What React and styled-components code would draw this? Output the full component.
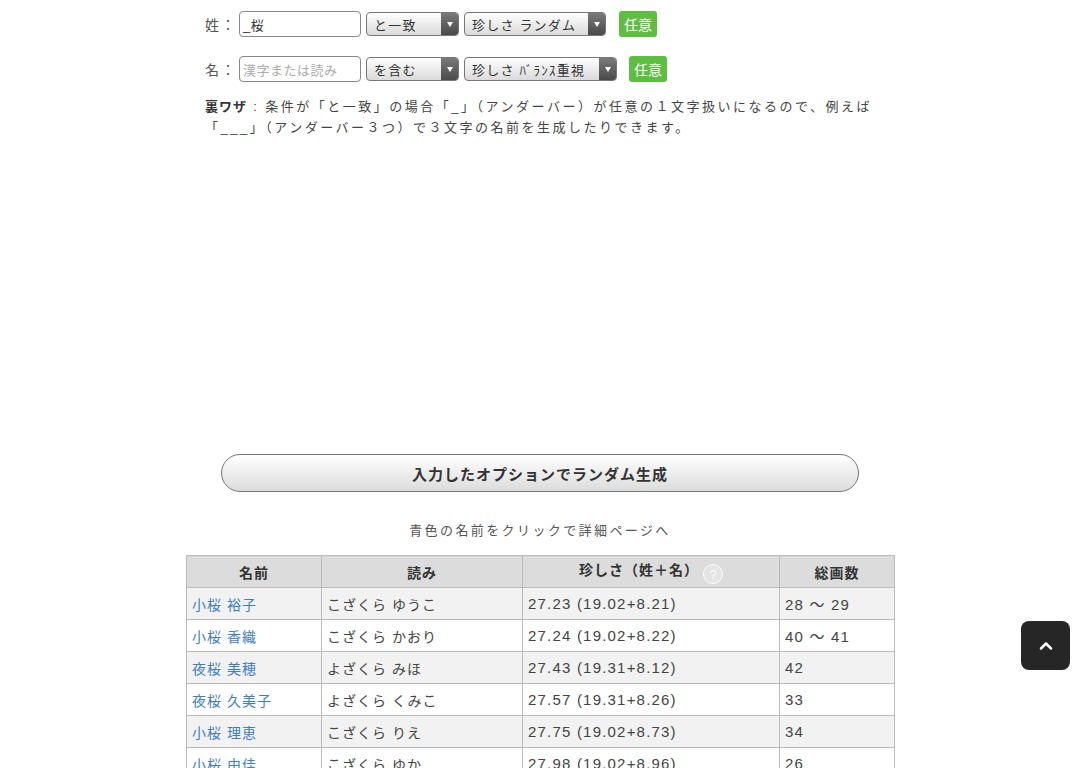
import React from 'react'
import styled, { createGlobalStyle } from 'styled-components'
import { ChevronUp } from 'lucide-react'

const GlobalStyle = createGlobalStyle`
  body {
    margin: 0;
    background: #fff;
    color: #444;
    font-family: "Liberation Sans", "Noto Sans CJK JP", sans-serif;
  }
`

const Page = styled.div`
  width: 708px;
  margin: 0 auto;
  padding-top: 11px;
`

const Form = styled.div`
  padding-left: 19px;
  display: flex;
  flex-direction: column;
  gap: 19px;
`

const FieldRow = styled.div`
  display: flex;
  align-items: center;
  height: 26px;
`

const Label = styled.span`
  width: 34px;
  font-size: 14px;
  letter-spacing: 2px;
  color: #555;
`

const TextInput = styled.div`
  box-sizing: border-box;
  width: 122px;
  height: 26px;
  border: 1px solid #888;
  border-radius: 4px;
  padding: 0 3px;
  display: flex;
  align-items: center;
  font-size: 13px;
  letter-spacing: 0.5px;
  color: ${props => (props.$placeholder ? '#aaa' : '#333')};
  background: #fff;
`

const Select = styled.div`
  box-sizing: border-box;
  width: ${props => props.$width}px;
  height: 24px;
  margin-left: 5px;
  border: 1px solid #777;
  border-radius: 4px;
  background: linear-gradient(#ffffff, #dadada);
  display: flex;
  align-items: stretch;
  overflow: hidden;
`

const SelectText = styled.span`
  flex: 1;
  display: flex;
  align-items: center;
  padding-left: 7px;
  font-size: 13px;
  letter-spacing: 1.2px;
  color: #333;
  white-space: nowrap;
`

const SelectArrow = styled.span`
  width: 17px;
  background: linear-gradient(#7a7a7a, #4a4a4a);
  display: flex;
  align-items: center;
  justify-content: center;
  &::after {
    content: '';
    border-left: 3px solid transparent;
    border-right: 3px solid transparent;
    border-top: 5px solid #fff;
  }
`

const AnyButton = styled.span`
  box-sizing: border-box;
  height: 26px;
  padding: 0 5px;
  margin-left: ${props => props.$gap}px;
  background: #5cbf40;
  border-radius: 3px;
  color: #fff;
  font-size: 14px;
  display: flex;
  align-items: center;
`

const Note = styled.p`
  margin: 14px 0 0;
  padding-left: 19px;
  font-size: 13px;
  line-height: 21px;
  letter-spacing: 2.5px;
  color: #444;
  b {
    color: #333;
    letter-spacing: 1px;
  }
`

const AdSpace = styled.div`
  height: 316px;
`

const GenerateButton = styled.div`
  box-sizing: border-box;
  width: 638px;
  height: 38px;
  margin: 0 auto;
  border: 1px solid #777;
  border-radius: 19px;
  background: linear-gradient(#ffffff, #dcdcdc);
  display: flex;
  align-items: center;
  justify-content: center;
  font-size: 15px;
  font-weight: bold;
  letter-spacing: 1px;
  color: #333;
`

const Caption = styled.p`
  margin: 29px 0 14px;
  text-align: center;
  font-size: 13px;
  line-height: 20px;
  letter-spacing: 2.4px;
  color: #555;
`

const Table = styled.table`
  width: 708px;
  border-collapse: collapse;
  table-layout: fixed;
`

const Th = styled.th`
  height: 31px;
  padding: 0;
  border: 1px solid #bbb;
  background: #dcdcdc;
  font-size: 14px;
  font-weight: bold;
  letter-spacing: 1px;
  color: #333;
  text-align: center;
`

const Tr = styled.tr`
  background: ${props => (props.$odd ? '#f2f2f2' : '#fff')};
`

const Td = styled.td`
  height: 31px;
  padding: 0 0 0 5px;
  border: 1px solid #bbb;
  font-size: ${props => (props.$num ? 15 : 14)}px;
  letter-spacing: ${props => (props.$num ? 1.2 : 1)}px;
  color: #444;
  white-space: nowrap;
`

const NameLink = styled.a`
  color: #3d7dc6;
  text-decoration: none;
`

const HelpIcon = styled.span`
  display: inline-flex;
  align-items: center;
  justify-content: center;
  box-sizing: border-box;
  width: 20px;
  height: 20px;
  margin-left: 4px;
  vertical-align: -4px;
  border: 1.5px solid #fff;
  border-radius: 50%;
  background: #e4e4e4;
  color: #fff;
  font-size: 13px;
  font-weight: normal;
  letter-spacing: 0;
`

const BackToTop = styled.div`
  position: fixed;
  right: 10px;
  bottom: 98px;
  width: 49px;
  height: 49px;
  border-radius: 8px;
  background: #262626;
  display: flex;
  align-items: center;
  justify-content: center;
`

const rows = [
  ['小桜 裕子', 'こざくら ゆうこ', '27.23 (19.02+8.21)', '28 〜 29'],
  ['小桜 香織', 'こざくら かおり', '27.24 (19.02+8.22)', '40 〜 41'],
  ['夜桜 美穂', 'よざくら みほ', '27.43 (19.31+8.12)', '42'],
  ['夜桜 久美子', 'よざくら くみこ', '27.57 (19.31+8.26)', '33'],
  ['小桜 理恵', 'こざくら りえ', '27.75 (19.02+8.73)', '34'],
  ['小桜 由佳', 'こざくら ゆか', '27.98 (19.02+8.96)', '26'],
]

const App = () => (
  <>
    <GlobalStyle />
    <Page>
      <Form>
        <FieldRow>
          <Label>姓：</Label>
          <TextInput>_桜</TextInput>
          <Select $width={93}>
            <SelectText>と一致</SelectText>
            <SelectArrow />
          </Select>
          <Select $width={142}>
            <SelectText>珍しさ ランダム</SelectText>
            <SelectArrow />
          </Select>
          <AnyButton $gap={13}>任意</AnyButton>
        </FieldRow>
        <FieldRow>
          <Label>名：</Label>
          <TextInput $placeholder>漢字または読み</TextInput>
          <Select $width={93}>
            <SelectText>を含む</SelectText>
            <SelectArrow />
          </Select>
          <Select $width={153}>
            <SelectText>珍しさ ﾊﾞﾗﾝｽ重視</SelectText>
            <SelectArrow />
          </Select>
          <AnyButton $gap={12}>任意</AnyButton>
        </FieldRow>
      </Form>
      <Note>
        <b>裏ワザ</b> : 条件が「と一致」の場合「_」（アンダーバー）が任意の１文字扱いになるので、例えば
        「___」（アンダーバー３つ）で３文字の名前を生成したりできます。
      </Note>
      <AdSpace />
      <GenerateButton>入力したオプションでランダム生成</GenerateButton>
      <Caption>青色の名前をクリックで詳細ページへ</Caption>
      <Table>
        <colgroup>
          <col style={{ width: 135 }} />
          <col style={{ width: 201 }} />
          <col style={{ width: 257 }} />
          <col style={{ width: 115 }} />
        </colgroup>
        <thead>
          <tr>
            <Th>名前</Th>
            <Th>読み</Th>
            <Th>
              珍しさ（姓＋名）<HelpIcon>?</HelpIcon>
            </Th>
            <Th>総画数</Th>
          </tr>
        </thead>
        <tbody>
          {rows.map(([name, kana, rarity, strokes], i) => (
            <Tr key={name} $odd={i % 2 === 0}>
              <Td>
                <NameLink href="#">{name}</NameLink>
              </Td>
              <Td>{kana}</Td>
              <Td $num>{rarity}</Td>
              <Td $num>{strokes}</Td>
            </Tr>
          ))}
        </tbody>
      </Table>
    </Page>
    <BackToTop>
      <ChevronUp size={20} color="#fff" strokeWidth={3} />
    </BackToTop>
  </>
)

export default App
